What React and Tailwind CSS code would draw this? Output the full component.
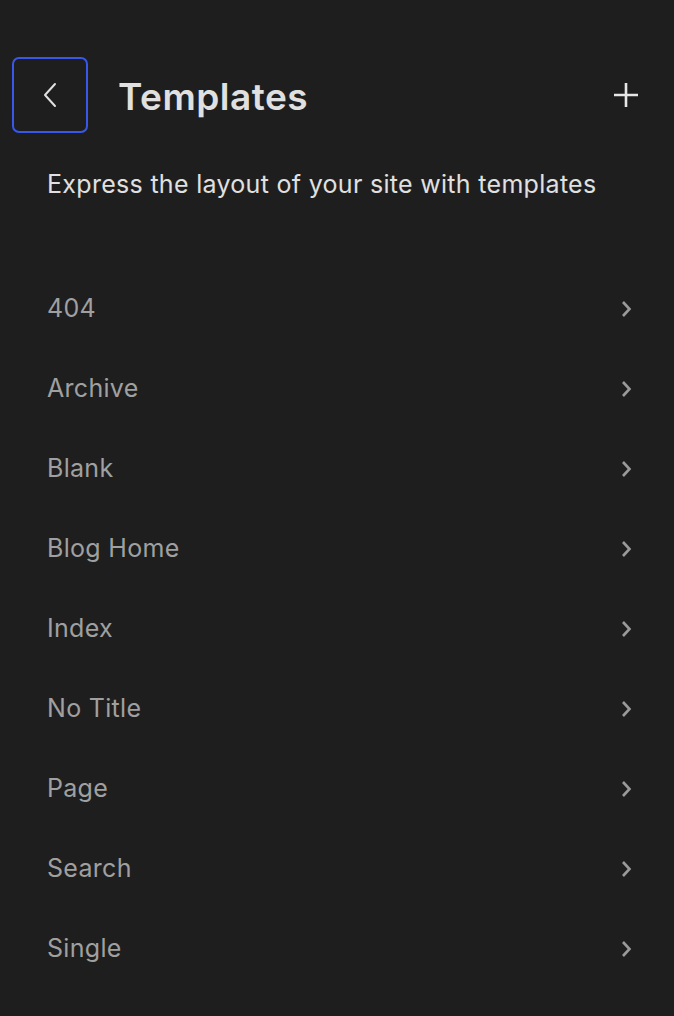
const templates = ['404', 'Archive', 'Blank', 'Blog Home', 'Index', 'No Title', 'Page', 'Search', 'Single'];

function ChevronLeft() {
  return (
    <svg width="16" height="26" viewBox="0 0 16 26" fill="none">
      <polyline points="13,2 3,13 13,24" stroke="#e0e0e0" strokeWidth="2" strokeLinecap="round" strokeLinejoin="round" />
    </svg>
  );
}

function ChevronRight() {
  return (
    <svg width="12" height="18" viewBox="0 0 12 18" fill="none">
      <polyline points="3,2 9.5,9 3,16" stroke="#9a9a9a" strokeWidth="2.6" strokeLinejoin="miter" />
    </svg>
  );
}

function Plus() {
  return (
    <svg width="26" height="26" viewBox="0 0 26 26" fill="none">
      <path d="M13 1v24M1 13h24" stroke="#e6e6e6" strokeWidth="2.6" />
    </svg>
  );
}

export default function App() {
  return (
    <div className="min-h-screen w-full bg-[#1e1e1e] pt-[57px] font-['Inter',sans-serif]">
      <div className="flex items-center pl-[12px] pr-[35px]">
        <button className="flex h-[76px] w-[76px] items-center justify-center rounded-[7px] border-2 border-[#3858e9]">
          <ChevronLeft />
        </button>
        <h1 className="ml-[30px] mt-[2px] text-[37px] font-semibold leading-none tracking-[0.5px] text-[#e0e0e0]">Templates</h1>
        <div className="ml-auto">
          <Plus />
        </div>
      </div>
      <p className="mt-[35px] px-[47px] text-[25px] leading-[32px] tracking-[0.3px] text-[#e0e0e0]">
        Express the layout of your site with templates
      </p>
      <ul className="mt-[69px]">
        {templates.map((name) => (
          <li key={name} className="flex h-[80px] items-center justify-between pl-[47px] pr-[42px]">
            <span className="text-[25px] tracking-[0.3px] text-[#a0a0a0]">{name}</span>
            <ChevronRight />
          </li>
        ))}
      </ul>
    </div>
  );
}
